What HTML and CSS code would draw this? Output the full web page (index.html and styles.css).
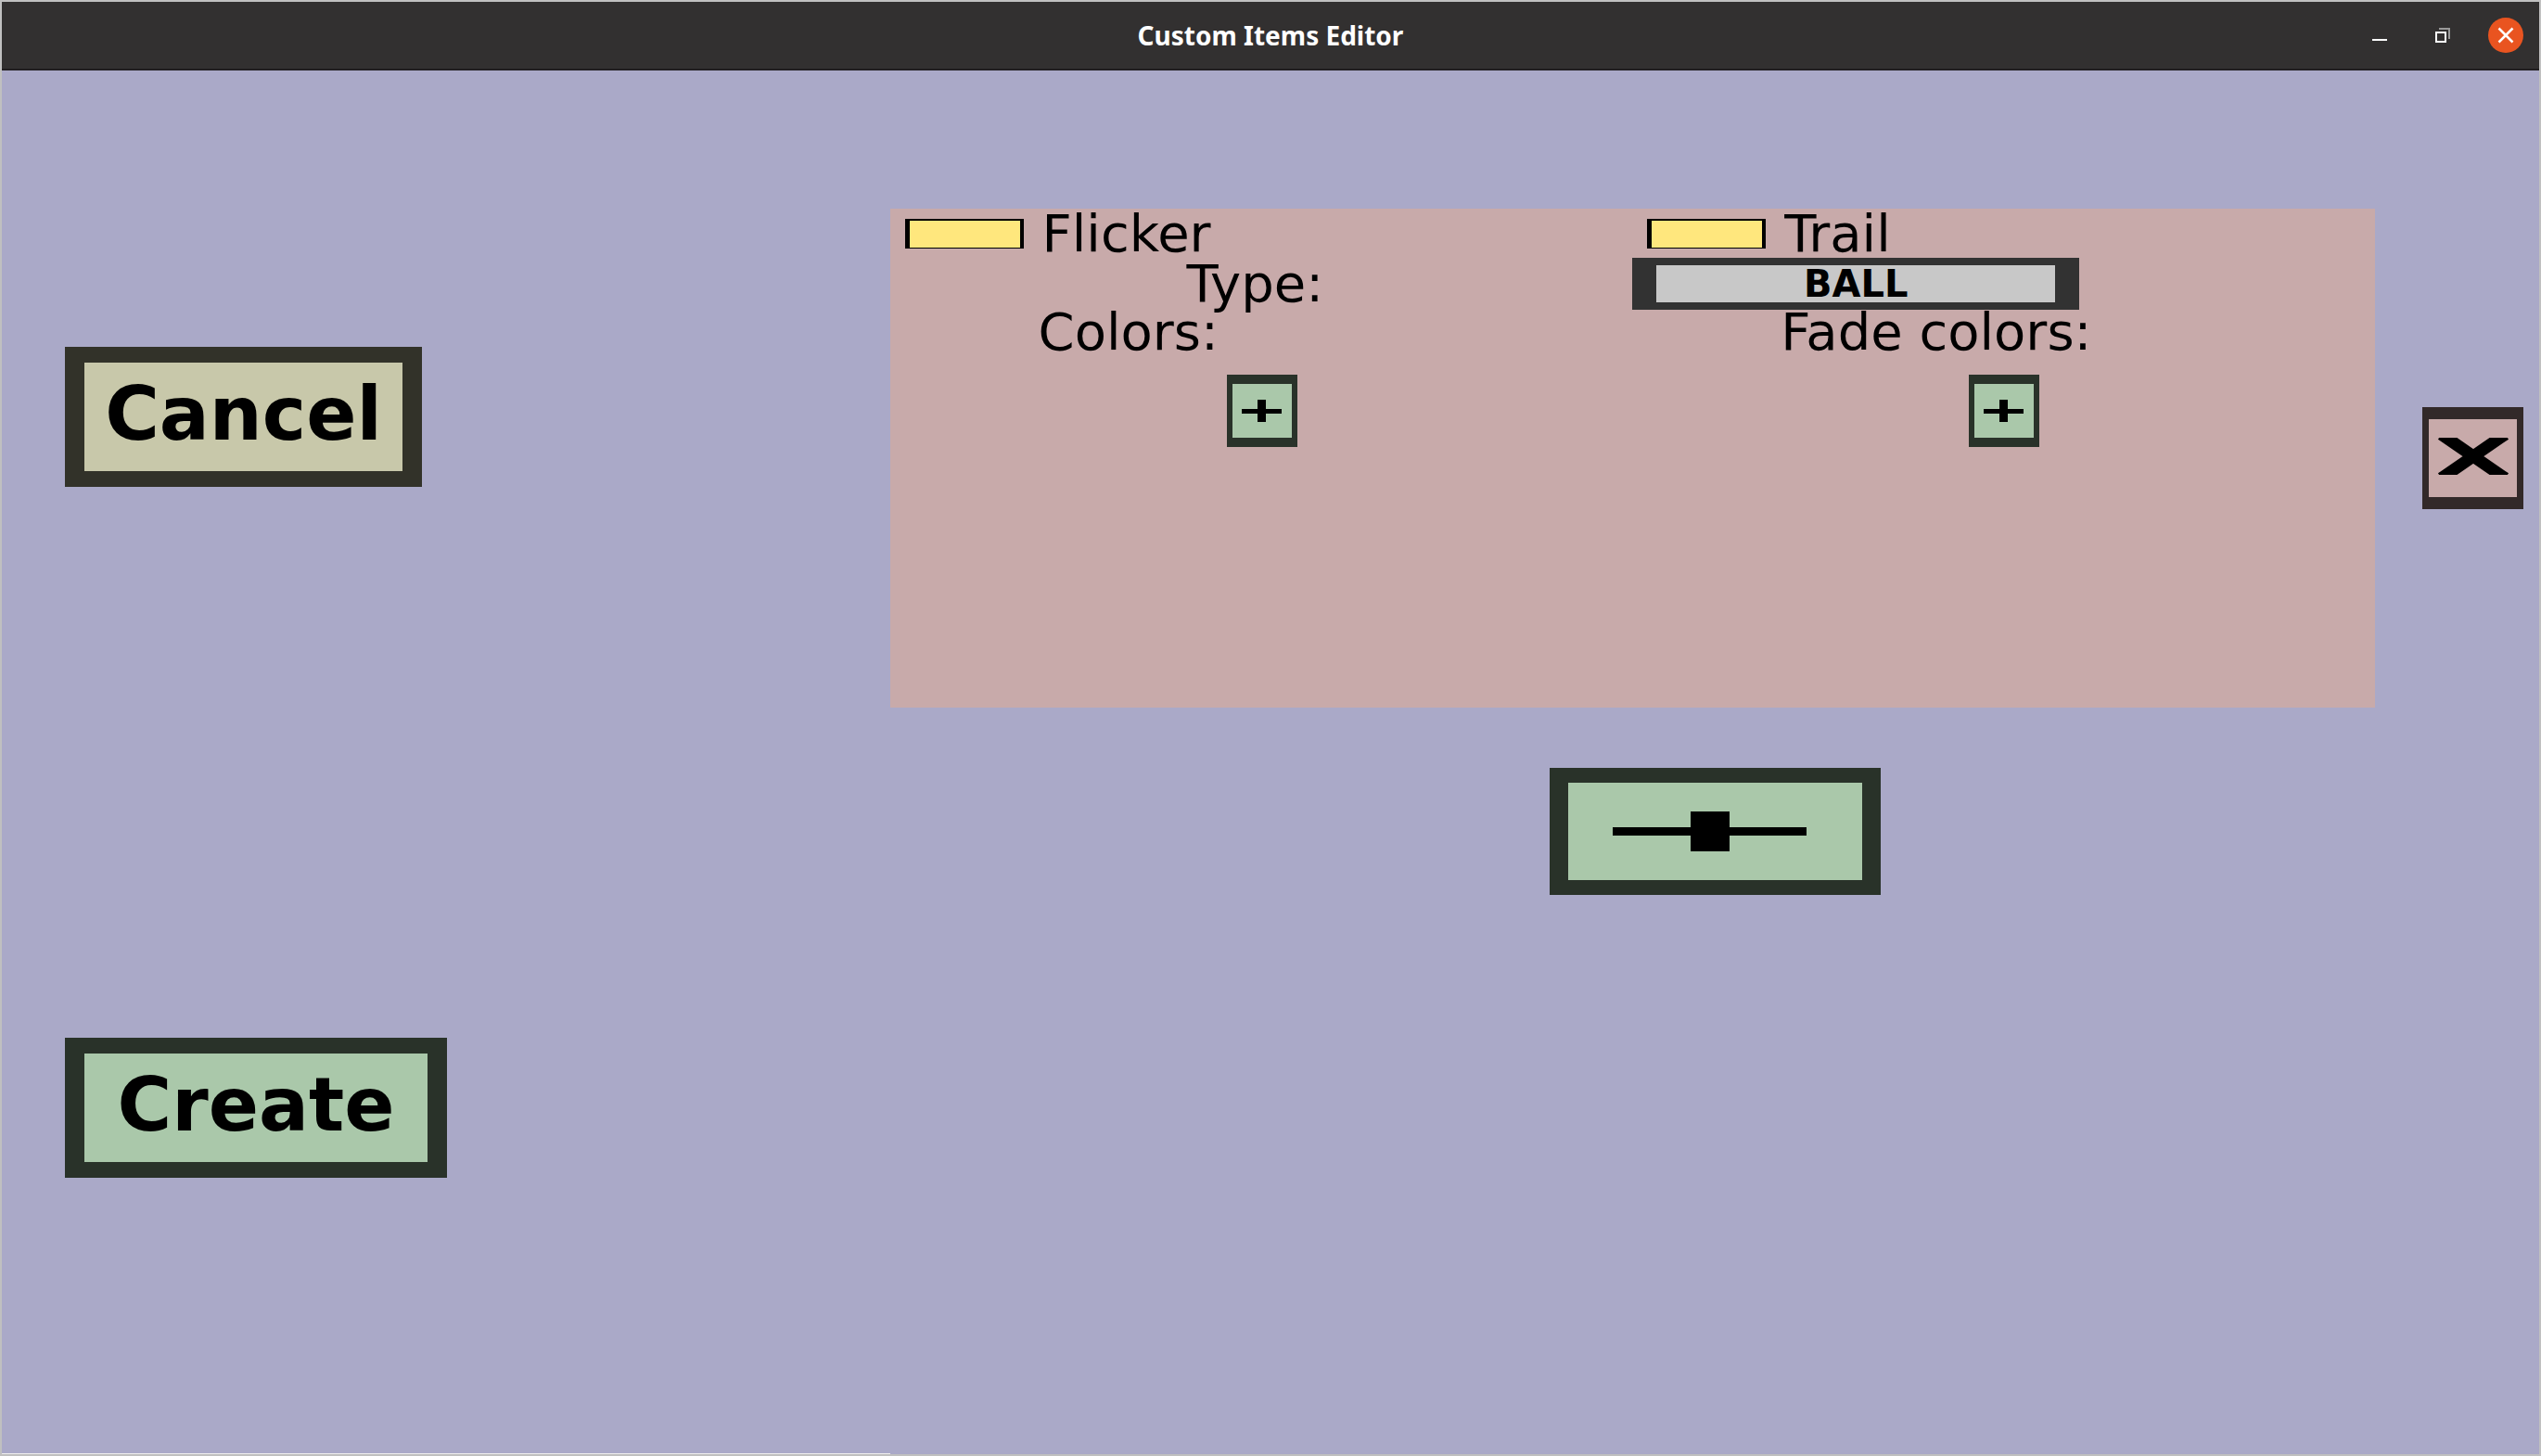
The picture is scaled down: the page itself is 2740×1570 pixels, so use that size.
FILE: index.html
```html
<!DOCTYPE html>
<html lang="en">
<head>
<meta charset="utf-8">
<title>Custom Items Editor</title>
<link rel="stylesheet" href="styles.css">
</head>
<body>
<div class="window">
  <header class="titlebar">
    <h1 class="title">Custom Items Editor</h1>
    <div class="window-controls">
      <button class="window-button" type="button" aria-label="Minimize">
        <svg width="38" height="38" viewBox="0 0 38 38"><path d="M11 24h16" stroke="#fff" stroke-width="2"/></svg>
      </button>
      <button class="window-button" type="button" aria-label="Restore">
        <svg width="38" height="38" viewBox="0 0 38 38" fill="none" stroke-width="2"><path d="M15 12h11v11" stroke="#999"/><path d="M12 16h10v10h-10z" stroke="#fff"/></svg>
      </button>
      <button class="window-button" type="button" aria-label="Close">
        <svg width="38" height="38" viewBox="0 0 38 38"><circle cx="19" cy="19" r="19" fill="#e95420"/><path d="M11.500 11.500l15 15M26.500 11.500l-15 15" stroke="#fff" stroke-width="2.500"/></svg>
      </button>
    </div>
  </header>
  <main class="editor">
    <nav class="actions">
      <button class="button cancel" type="button">Cancel</button>
      <button class="button create" type="button">Create</button>
    </nav>
    <section class="effects">
      <div class="effect">
        <div class="cell option">
          <input class="check" type="checkbox" id="flicker">
          <label for="flicker">Flicker</label>
        </div>
        <div class="cell option">
          <input class="check" type="checkbox" id="trail">
          <label for="trail">Trail</label>
        </div>
        <div class="cell type-label" id="type-label">Type:</div>
        <button class="type" type="button" aria-describedby="type-label">BALL</button>
        <div class="cell heading">Colors:</div>
        <div class="cell heading">Fade colors:</div>
        <button class="add-color" type="button" aria-label="Add color">
          <svg width="44" height="24" viewBox="0 0 44 24"><path d="M0 12.500h43" stroke="#000" stroke-width="5"/><path d="M21.500 0v24" stroke="#000" stroke-width="9"/></svg>
        </button>
        <button class="add-color" type="button" aria-label="Add fade color">
          <svg width="44" height="24" viewBox="0 0 44 24"><path d="M0 12.500h43" stroke="#000" stroke-width="5"/><path d="M21.500 0v24" stroke="#000" stroke-width="9"/></svg>
        </button>
      </div>
      <button class="add-effect" type="button" aria-label="Add effect">
        <svg width="210" height="44" viewBox="0 0 210 44"><path d="M0 21.500h209" stroke="#000" stroke-width="9"/><path d="M105 0v43" stroke="#000" stroke-width="42"/></svg>
      </button>
    </section>
    <aside class="remove-column">
      <button class="remove" type="button" aria-label="Remove effect">
        <svg width="80" height="40" viewBox="0 0 80 40"><path d="M11 0L69 40M69 0L11 40" stroke="#000" stroke-width="13" stroke-linecap="square"/></svg>
      </button>
    </aside>
  </main>
</div>
</body>
</html>
```

FILE: styles.css
```css
* {
  box-sizing: border-box;
}

body {
  margin: 0;
  font-family: "DejaVu Sans", sans-serif;
  color: #000;
}

button {
  display: flex;
  align-items: center;
  justify-content: center;
  padding: 0;
  font-family: inherit;
  color: inherit;
  border-style: solid;
  border-radius: 0;
}

svg {
  display: block;
}

.window {
  display: flex;
  flex-direction: column;
  min-height: 100vh;
  border: 2px solid #c0c0c0;
  background: #aaa9c8;
}

/* Title bar */
.titlebar {
  display: grid;
  grid-template-columns: 1fr auto 1fr;
  align-items: center;
  height: 74px;
  padding-right: 17px;
  background: #323030;
  border-bottom: 2px solid #211e21;
}

.title {
  grid-column: 2;
  margin: 0;
  padding-left: 17px;
  font: bold 28px/36px "Noto Sans", sans-serif;
  color: #fff;
}

.window-controls {
  display: flex;
  justify-content: flex-end;
  gap: 30px;
}

.window-button {
  background: none;
  border: 0;
}

/* Editor area */
.editor {
  flex: 1;
  display: grid;
  grid-template-columns: 35% 1fr 177px;
}

.actions {
  display: flex;
  flex-direction: column;
  align-items: flex-start;
  gap: 594px;
  padding: 298px 0 0 68px;
  border-bottom: 1px solid #eee;
}

.button {
  height: 151px;
  padding: 0 20px 6px;
  border-width: 17px 21px;
  font-size: 80px;
  font-weight: bold;
  line-height: 94px;
}

.cancel {
  width: 385px;
  background: #c8c8aa;
  border-color: #323229;
}

.create {
  width: 412px;
  background: #aac8aa;
  border-color: #293229;
}

.effects {
  display: flex;
  flex-direction: column;
  align-items: center;
  gap: 65px;
  padding-top: 149px;
}

.effect {
  display: grid;
  grid-template-columns: 1fr 1fr;
  grid-template-rows: 53px 56px 48px 78px;
  align-content: start;
  width: 100%;
  height: 538px;
  background: #c8aaaa;
}

.cell {
  display: flex;
  align-items: center;
  font-size: 56px;
  line-height: 54px;
}

.option {
  gap: 20px;
  padding-left: 16px;
}

.check {
  appearance: none;
  width: 128px;
  height: 32px;
  margin: 0;
  background: #ffe77d;
  border: solid #000;
  border-width: 2px 4px 1px 5px;
}

.type-label {
  padding-left: 320px;
}

.type {
  width: 482px;
  background: #c8c8c8;
  border-color: #323232;
  border-width: 8px 26px;
  font-size: 40px;
  font-weight: bold;
  line-height: 40px;
}

.heading {
  padding-left: 160px;
}

.add-color {
  width: 76px;
  height: 78px;
  margin: 22px 0 0 363px;
  background: #aac8aa;
  border-color: #293229;
  border-width: 10px 6px;
}

.add-effect {
  width: 357px;
  height: 137px;
  margin-left: 178px;
  padding-right: 10px;
  background: #aac8aa;
  border-color: #293229;
  border-width: 16px 20px;
}

.remove-column {
  padding: 363px 0 0 51px;
}

.remove {
  width: 109px;
  height: 110px;
  padding-bottom: 4px;
  background: #c8aaaa;
  border-color: #322929;
  border-width: 13px 7px;
}
```
